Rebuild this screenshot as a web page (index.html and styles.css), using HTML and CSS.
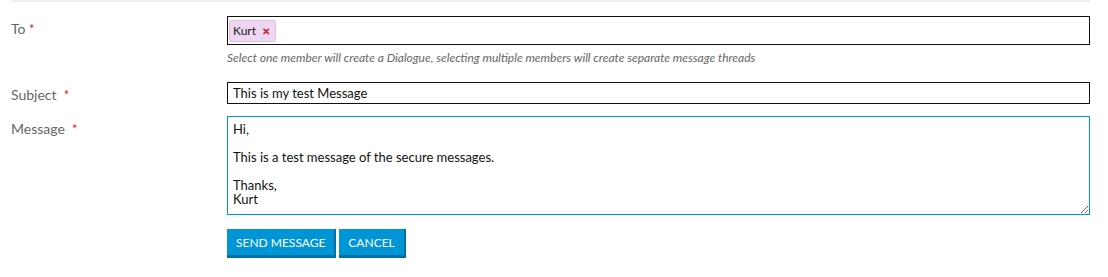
FILE: index.html
```html
<!DOCTYPE html>
<html>
<head>
    <title>New Message</title>
    <link rel="stylesheet" href="styles.css">
</head>
<body>
    <div class="message-form">
        <!-- Recipients -->
        <div class="form-row row-to">
            <label class="form-label">To <span class="req">*</span></label>
            <div class="form-field">
                <div class="tag-input">
                    <span class="tag">Kurt <span class="tag-remove">&#x2715;</span></span>
                </div>
                <div class="help-text">Select one member will create a Dialogue, selecting multiple members will create separate message threads</div>
            </div>
        </div>

        <div class="form-row row-subject">
            <label class="form-label">Subject &nbsp;<span class="req">*</span></label>
            <div class="form-field">
                <input type="text" class="text-input" value="This is my test Message">
            </div>
        </div>

        <div class="form-row row-message">
            <label class="form-label">Message &nbsp;<span class="req">*</span></label>
            <div class="form-field">
                <textarea class="text-area">Hi,

This is a test message of the secure messages.

Thanks,
Kurt</textarea>
            </div>
        </div>

        <div class="form-row row-buttons">
            <div></div>
            <div class="form-field buttons">
                <button class="btn">SEND MESSAGE</button>
                <button class="btn">CANCEL</button>
            </div>
        </div>
    </div>
</body>
</html>
```

FILE: styles.css
```css
body {
    margin: 0;
    padding: 0;
    font-family: Lato, "Open Sans", sans-serif;
    font-size: 13px;
    color: #222;
    background: #fff;
}

.message-form {
    margin: 0 18px 0 11px;
    border-top: 2px solid #eeeeee;
    padding-top: 14px;
}

.form-row {
    display: grid;
    grid-template-columns: 216px 1fr;
}

.form-label {
    color: #666;
    font-size: 14px;
    line-height: 16px;
    padding-top: 5px;
}

.req {
    color: #e02020;
    font-size: 13px;
}

.tag-input {
    height: 25px;
    border: 1px solid #111;
    padding: 1px;
    display: flex;
    align-items: center;
}

.tag {
    display: inline-flex;
    align-items: center;
    height: 20px;
    padding: 0 5px 0 3px;
    background-color: #f0d6f2;
    border: 1px solid #d9c6da;
    border-radius: 2px;
    font-size: 12px;
    color: #222;
}

.tag-remove {
    color: #c0141e;
    font-size: 10px;
    font-weight: bold;
    margin-left: 6px;
}

.help-text {
    font-style: italic;
    font-size: 12px;
    color: #666;
    margin-top: 6px;
    line-height: 14px;
}

.row-subject {
    margin-top: 17px;
}

.text-input {
    display: block;
    box-sizing: border-box;
    width: 100%;
    height: 22px;
    border: 1px solid #111;
    padding: 0 5px;
    font-family: inherit;
    font-size: 13px;
    color: #111;
    outline: none;
}

.row-message {
    margin-top: 12px;
}

.text-area {
    display: block;
    box-sizing: border-box;
    width: 100%;
    height: 99px;
    border: 1px solid #0095d6;
    padding: 5px 5px 4px;
    font-family: inherit;
    font-size: 13px;
    line-height: 14px;
    color: #111;
    resize: vertical;
    outline: none;
}

.row-buttons {
    margin-top: 14px;
}

.buttons {
    display: flex;
    gap: 3px;
}

.btn {
    height: 29px;
    padding: 0 9px;
    background-color: #0095d6;
    color: #fff;
    border: none;
    border-right: 2px solid #00709f;
    border-bottom: 3px solid #00709f;
    font-family: inherit;
    font-size: 12px;
    cursor: pointer;
}
```
